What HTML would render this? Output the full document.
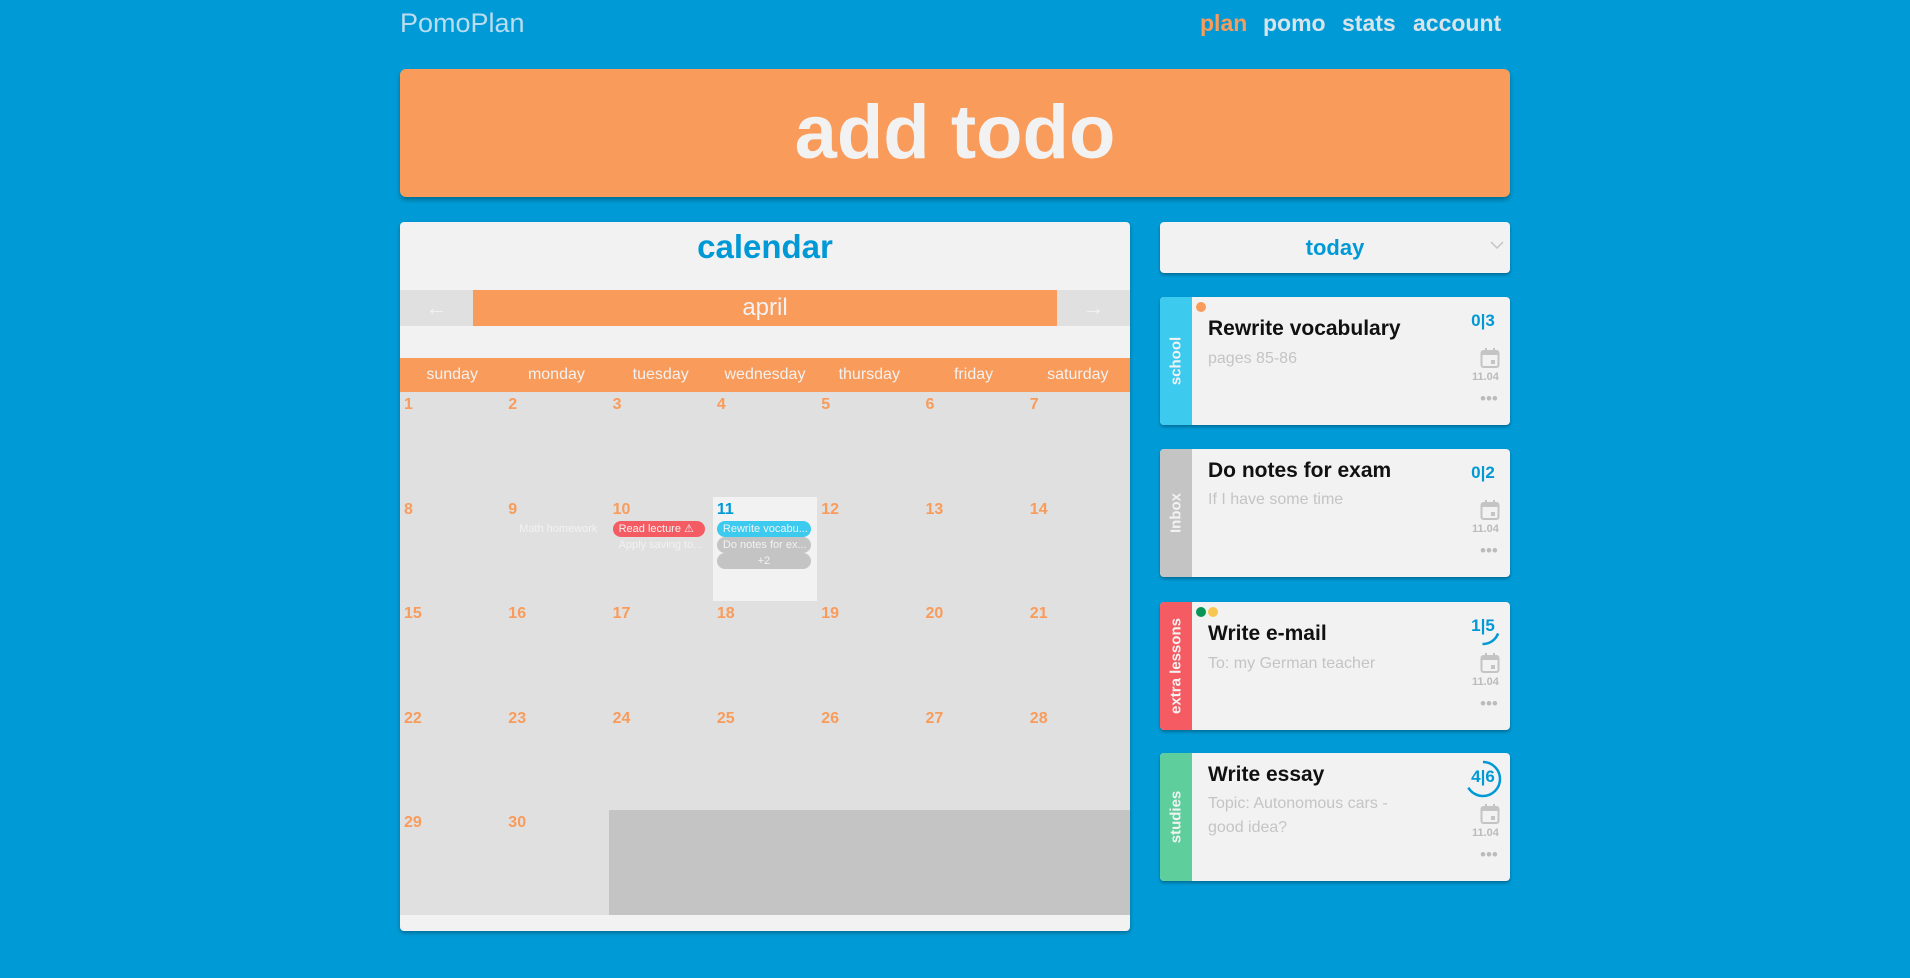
<!DOCTYPE html>
<html><head><meta charset="utf-8">
<style>
*{margin:0;padding:0;box-sizing:border-box}
body{width:1910px;height:978px;background:#009bd6;font-family:"Liberation Sans",sans-serif;position:relative;overflow:hidden}
.abs{position:absolute}
.logo{left:400px;top:8px;font-size:27px;color:#b9dcef;font-weight:300}
.nav{top:10px;font-size:23px;font-weight:bold;color:#d9e3ea}
.add{left:400px;top:69px;width:1110px;height:128px;background:#f99b5a;border-radius:6px;box-shadow:0 3px 5px rgba(0,0,0,.3);text-align:center;line-height:128px;font-size:76px;font-weight:bold;color:#f2f2f2}
.cal{left:400px;top:222px;width:730px;height:709px;background:#f2f2f2;border-radius:4px;box-shadow:0 2px 4px rgba(0,0,0,.3);overflow:hidden}
.ct{position:absolute;top:0;left:0;width:730px;text-align:center;top:6px;font-size:33px;font-weight:bold;color:#0099d6}
.mb{position:absolute;top:68px;left:73px;width:584px;height:36px;background:#f99b5a;color:#f2f2f2;text-align:center;font-size:24px;line-height:36px}
.arr{position:absolute;top:68px;width:73px;height:36px;background:#e0e0e0;color:#f2f2f2;text-align:center;font-size:22px;line-height:36px}
.dh{position:absolute;top:136px;left:0;width:730px;height:34px;background:#f99b5a;display:flex}
.dh div{flex:1;text-align:center;color:#f2f2f2;font-size:16px;line-height:34px}
.grid{position:absolute;top:170px;left:0;width:730px;height:523px;background:#e0e0e0}
.cell{position:absolute;width:104.3px;height:104.5px}
.n{position:absolute;left:4px;top:4px;font-size:16px;font-weight:bold;color:#f99b5a}
.pill{position:absolute;left:4px;width:94px;height:16px;border-radius:8px;font-size:11px;color:#f2f2f2;line-height:16px;padding-left:6px;white-space:nowrap;overflow:hidden}
.card{left:1160px;width:350px;height:128px;background:#f2f2f2;border-radius:4px;box-shadow:0 2px 3px rgba(0,0,0,.3);overflow:hidden}
.stripe{position:absolute;left:0;top:0;width:32px;height:128px}
.stripe span{position:absolute;left:16px;top:64px;transform:translate(-50%,-50%) rotate(-90deg);white-space:nowrap;color:#f2f2f2;font-weight:bold;font-size:15px}
.tt{position:absolute;left:48px;top:20px;font-size:21px;font-weight:bold;color:#111}
.sub{position:absolute;left:48px;top:50px;font-size:16px;color:#c4c4c4;line-height:24px}
.nd .tt{top:10px}
.nd .sub{top:39px}
.cnt{position:absolute;left:308px;top:14px;font-size:17px;font-weight:bold;color:#0099d6;width:30px;text-align:center}
.date{position:absolute;left:312px;top:74px;font-size:11px;color:#bbb;font-weight:bold}
.dots{position:absolute;left:320px;top:92px;font-size:17px;color:#bbb;letter-spacing:0px}
.ic{position:absolute;left:320px;top:50px}
.dot{position:absolute;top:5px;width:10px;height:10px;border-radius:50%}
</style></head><body>
<div class="abs logo">PomoPlan</div>
<div class="abs nav" style="left:1200px;color:#f99b5a">plan</div>
<div class="abs nav" style="left:1263px">pomo</div>
<div class="abs nav" style="left:1342px">stats</div>
<div class="abs nav" style="left:1413px">account</div>
<div class="abs add">add todo</div>

<div class="abs cal">
<div class="ct">calendar</div>
<div class="arr" style="left:0">←</div>
<div class="mb">april</div>
<div class="arr" style="left:657px">→</div>
<div class="dh"><div>sunday</div><div>monday</div><div>tuesday</div><div>wednesday</div><div>thursday</div><div>friday</div><div>saturday</div></div>
<div class="grid">
<div style="position:absolute;left:209px;top:418px;width:521px;height:105px;background:#c4c4c4"></div>
<div class="cell" style="left:313px;top:104.5px;background:#f2f2f2"></div>
<div class="cell" style="left:0;top:0"><div class="n">1</div></div>
<div class="cell" style="left:104.3px;top:0"><div class="n">2</div></div>
<div class="cell" style="left:208.6px;top:0"><div class="n">3</div></div>
<div class="cell" style="left:312.9px;top:0"><div class="n">4</div></div>
<div class="cell" style="left:417.2px;top:0"><div class="n">5</div></div>
<div class="cell" style="left:521.5px;top:0"><div class="n">6</div></div>
<div class="cell" style="left:625.8px;top:0"><div class="n">7</div></div>
<div class="cell" style="left:0;top:104.5px"><div class="n">8</div></div>
<div class="cell" style="left:104.3px;top:104.5px"><div class="n">9</div><div class="pill" style="top:24px;color:#f2f2f2;text-align:center">Math homework</div></div>
<div class="cell" style="left:208.6px;top:104.5px"><div class="n">10</div><div class="pill" style="top:24px;background:#f45b62;width:92px">Read lecture ⚠</div><div class="pill" style="top:40px;color:#f2f2f2">Apply saving to...</div></div>
<div class="cell" style="left:312.9px;top:104.5px"><div class="n" style="color:#0099d6">11</div><div class="pill" style="top:24px;background:#3ccbef">Rewrite vocabu...</div><div class="pill" style="top:40px;background:#c4c4c4">Do notes for ex...</div><div class="pill" style="top:56px;background:#c4c4c4;text-align:center;padding:0">+2</div></div>
<div class="cell" style="left:417.2px;top:104.5px"><div class="n">12</div></div>
<div class="cell" style="left:521.5px;top:104.5px"><div class="n">13</div></div>
<div class="cell" style="left:625.8px;top:104.5px"><div class="n">14</div></div>
<div class="cell" style="left:0;top:209px"><div class="n">15</div></div>
<div class="cell" style="left:104.3px;top:209px"><div class="n">16</div></div>
<div class="cell" style="left:208.6px;top:209px"><div class="n">17</div></div>
<div class="cell" style="left:312.9px;top:209px"><div class="n">18</div></div>
<div class="cell" style="left:417.2px;top:209px"><div class="n">19</div></div>
<div class="cell" style="left:521.5px;top:209px"><div class="n">20</div></div>
<div class="cell" style="left:625.8px;top:209px"><div class="n">21</div></div>
<div class="cell" style="left:0;top:313.5px"><div class="n">22</div></div>
<div class="cell" style="left:104.3px;top:313.5px"><div class="n">23</div></div>
<div class="cell" style="left:208.6px;top:313.5px"><div class="n">24</div></div>
<div class="cell" style="left:312.9px;top:313.5px"><div class="n">25</div></div>
<div class="cell" style="left:417.2px;top:313.5px"><div class="n">26</div></div>
<div class="cell" style="left:521.5px;top:313.5px"><div class="n">27</div></div>
<div class="cell" style="left:625.8px;top:313.5px"><div class="n">28</div></div>
<div class="cell" style="left:0;top:418px"><div class="n">29</div></div>
<div class="cell" style="left:104.3px;top:418px"><div class="n">30</div></div>
</div>
</div>

<div class="abs" style="left:1160px;top:222px;width:350px;height:51px;background:#f2f2f2;border-radius:4px;box-shadow:0 2px 3px rgba(0,0,0,.3);text-align:center;line-height:51px;font-size:22px;font-weight:bold;color:#0099d6">today
<svg style="position:absolute;right:6px;top:18px" width="14" height="10"><path d="M1 2l6 6 6-6" stroke="#c4c4c4" stroke-width="1.5" fill="none"/></svg></div>

<!-- card 1 -->
<div class="abs card" style="top:297px">
<div class="stripe" style="background:#3ccbef"><span>school</span></div>
<div class="dot" style="left:36px;background:#f99b5a"></div>
<div class="tt">Rewrite vocabulary</div><div class="sub">pages 85-86</div>
<div class="cnt">0|3</div>
<svg class="ic" width="20" height="22" viewBox="0 0 20 22"><rect x="1.5" y="4" width="17" height="16" rx="2" fill="none" stroke="#c4c4c4" stroke-width="2"/><rect x="1.5" y="4" width="17" height="4" fill="#c4c4c4"/><rect x="5" y="1" width="2" height="4" fill="#c4c4c4"/><rect x="13" y="1" width="2" height="4" fill="#c4c4c4"/><rect x="11" y="13" width="4" height="4" fill="#c4c4c4"/></svg>
<div class="date">11.04</div><div class="dots">•••</div>
</div>
<!-- card 2 -->
<div class="abs card nd" style="top:449px">
<div class="stripe" style="background:#c4c4c4"><span>Inbox</span></div>
<div class="tt">Do notes for exam</div><div class="sub">If I have some time</div>
<div class="cnt">0|2</div>
<svg class="ic" width="20" height="22" viewBox="0 0 20 22"><rect x="1.5" y="4" width="17" height="16" rx="2" fill="none" stroke="#c4c4c4" stroke-width="2"/><rect x="1.5" y="4" width="17" height="4" fill="#c4c4c4"/><rect x="5" y="1" width="2" height="4" fill="#c4c4c4"/><rect x="13" y="1" width="2" height="4" fill="#c4c4c4"/><rect x="11" y="13" width="4" height="4" fill="#c4c4c4"/></svg>
<div class="date">11.04</div><div class="dots">•••</div>
</div>
<!-- card 3 -->
<div class="abs card" style="top:602px">
<div class="stripe" style="background:#f45b62"><span>extra lessons</span></div>
<div class="dot" style="left:36px;background:#079656"></div><div class="dot" style="left:48px;background:#f7c650"></div>
<div class="tt">Write e-mail</div><div class="sub">To: my German teacher</div>
<svg style="position:absolute;left:303px;top:6px" width="40" height="40"><circle cx="20" cy="20" r="16" fill="none" stroke="#0099d6" stroke-width="2.5" stroke-dasharray="20 200" transform="rotate(20 20 20)"/></svg>
<div class="cnt">1|5</div>
<svg class="ic" width="20" height="22" viewBox="0 0 20 22"><rect x="1.5" y="4" width="17" height="16" rx="2" fill="none" stroke="#c4c4c4" stroke-width="2"/><rect x="1.5" y="4" width="17" height="4" fill="#c4c4c4"/><rect x="5" y="1" width="2" height="4" fill="#c4c4c4"/><rect x="13" y="1" width="2" height="4" fill="#c4c4c4"/><rect x="11" y="13" width="4" height="4" fill="#c4c4c4"/></svg>
<div class="date">11.04</div><div class="dots">•••</div>
</div>
<!-- card 4 -->
<div class="abs card nd" style="top:753px">
<div class="stripe" style="background:#5ecf9c"><span>studies</span></div>
<div class="tt">Write essay</div><div class="sub">Topic: Autonomous cars -<br>good idea?</div>
<svg style="position:absolute;left:303px;top:6px" width="40" height="40"><circle cx="20" cy="20" r="17" fill="none" stroke="#0099d6" stroke-width="2.5" stroke-dasharray="71 200" transform="rotate(-90 20 20)"/></svg>
<div class="cnt" style="top:14px">4|6</div>
<svg class="ic" width="20" height="22" viewBox="0 0 20 22"><rect x="1.5" y="4" width="17" height="16" rx="2" fill="none" stroke="#c4c4c4" stroke-width="2"/><rect x="1.5" y="4" width="17" height="4" fill="#c4c4c4"/><rect x="5" y="1" width="2" height="4" fill="#c4c4c4"/><rect x="13" y="1" width="2" height="4" fill="#c4c4c4"/><rect x="11" y="13" width="4" height="4" fill="#c4c4c4"/></svg>
<div class="date">11.04</div><div class="dots">•••</div>
</div>
</body></html>
